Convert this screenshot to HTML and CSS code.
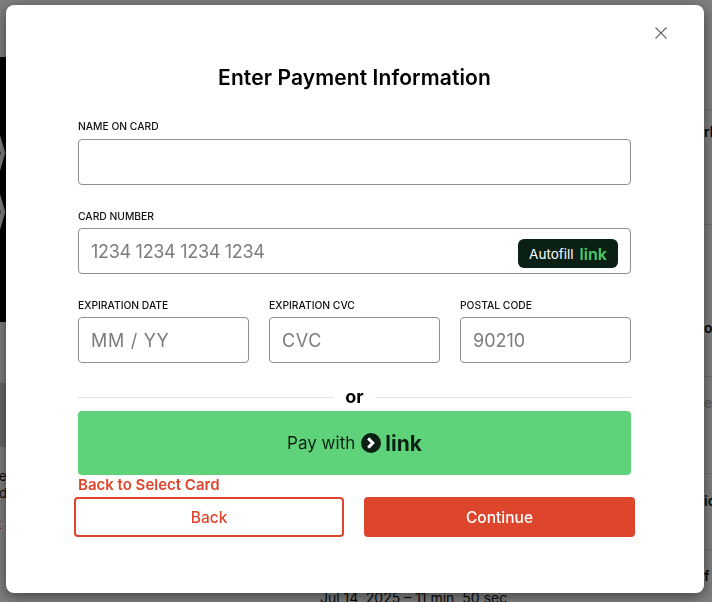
FILE: index.html
```html
<!DOCTYPE html>
<html lang="en">
<head>
  <meta charset="UTF-8" />
  <meta name="viewport" content="width=device-width, initial-scale=1.0"/>
  <title>Enter Payment Information</title>
  <link rel="stylesheet" href="styles.css">
</head>
<body>

  <div class="page">
    <div class="page-left">
      <div class="hero">
        <svg class="hero-art" width="6" height="265" viewBox="0 0 6 265" fill="none" stroke="#fff" stroke-width="4.5" stroke-linejoin="round">
          <path d="M-3 76 L3 96 L-3 116"/>
          <path d="M-3 135 L3 155 L-3 175"/>
        </svg>
      </div>
      <div class="band"></div>
      <div class="band band-dark"></div>
      <p class="peek peek-e">e</p>
      <p class="peek peek-do">do</p>
      <p class="peek peek-k">k</p>
    </div>
    <div class="page-mid">
      <p class="meta">Jul 14, 2025 – 11 min, 50 sec</p>
    </div>
    <div class="page-right">
      <div class="row row-1"></div>
      <div class="row row-2">rl</div>
      <div class="row row-3">o</div>
      <div class="row row-4"><span class="faint">e</span></div>
      <div class="row row-5">ic</div>
      <div class="row row-6">f</div>
    </div>
  </div>

  <div class="backdrop"></div>

  <div class="modal">
    <button class="close" aria-label="Close">
      <svg width="12" height="12" viewBox="0 0 12 12" fill="none" stroke="#666" stroke-width="1.1">
        <path d="M0.5 0.5 L11.5 11.5 M11.5 0.5 L0.5 11.5"/>
      </svg>
    </button>

    <h2 class="title">Enter Payment Information</h2>

    <div class="field field-name">
      <label>NAME ON CARD</label>
      <input type="text">
    </div>

    <div class="field field-card">
      <label>CARD NUMBER</label>
      <div class="input-wrap">
        <input class="tight" type="text" placeholder="1234 1234 1234 1234">
        <div class="autofill">Autofill <span>link</span></div>
      </div>
    </div>

    <div class="field-row">
      <div class="field">
        <label>EXPIRATION DATE</label>
        <input class="loose" type="text" placeholder="MM / YY">
      </div>
      <div class="field">
        <label>EXPIRATION CVC</label>
        <input class="loose" type="text" placeholder="CVC">
      </div>
      <div class="field">
        <label>POSTAL CODE</label>
        <input type="text" placeholder="90210">
      </div>
    </div>

    <div class="divider"><span>or</span></div>

    <button class="pay-link">
      Pay with
      <svg class="link-logo" width="20" height="20" viewBox="0 0 20 20">
        <circle cx="10" cy="10" r="10" fill="#0a2014"/>
        <path d="M7.2 5.4 L11.8 10 L7.2 14.6" fill="none" stroke="#fff" stroke-width="3"/>
      </svg>
      <b>link</b>
    </button>

    <a class="back-link" href="#">Back to Select Card</a>

    <div class="actions">
      <button class="btn btn-outline">Back</button>
      <button class="btn btn-solid">Continue</button>
    </div>
  </div>

</body>
</html>
```

FILE: styles.css
```css
:root {
  --red: #dd462c;
  --green: #5fd37a;
  --ink: #0a2014;
  --border: #8f8f8f;
}

* {
  box-sizing: border-box;
  margin: 0;
  padding: 0;
  font-family: Inter, sans-serif;
}

body {
  height: 100vh;
  overflow: hidden;
  background: #fff;
  color: #111;
}

/* page behind the modal */
.page {
  display: flex;
  height: 602px;
  overflow: hidden;
}

.page-left {
  width: 6px;
  overflow: hidden;
  padding-top: 57px;
}

.hero {
  height: 265px;
  background: #000;
}

.hero-art {
  display: block;
  overflow: hidden;
}

.band {
  height: 61px;
}

.band-dark {
  height: 64px;
  background: #d0d0d0;
}

.peek {
  font-size: 13px;
  line-height: 17px;
  white-space: nowrap;
}

.peek-e {
  margin-top: 21px;
  margin-left: -1px;
}

.peek-do {
  margin-left: -1px;
}

.peek-k {
  margin-top: 14px;
  margin-left: -6px;
  color: var(--red);
  font-weight: 600;
}

.page-mid {
  flex: 1;
  display: flex;
  align-items: flex-end;
  padding-left: 314px;
}

.meta {
  font-size: 14px;
  line-height: 17px;
  margin-bottom: -4px;
  white-space: nowrap;
}

.page-right {
  width: 8px;
  overflow: hidden;
}

.row {
  border-bottom: 1px solid #ddd;
  font-size: 14px;
  font-weight: 600;
  line-height: 17px;
  white-space: nowrap;
}

.row-1 { height: 110px; }
.row-2 { height: 115px; padding-top: 13px; }
.row-3 { height: 152px; padding-top: 94px; }
.row-4 { height: 97px; padding-top: 17px; }
.row-5 { height: 76px; padding-top: 18px; }
.row-6 { height: 52px; padding-top: 17px; border-bottom: 0; }

.faint {
  color: #bbb;
}

.backdrop {
  position: fixed;
  inset: 0;
  background: rgba(0, 0, 0, 0.5);
}

/* modal */
.modal {
  position: fixed;
  top: 5px;
  left: 6px;
  width: 698px;
  height: 588px;
  background: #fff;
  border-radius: 8px;
  box-shadow: 0 3px 14px rgba(0, 0, 0, 0.5);
  padding: 61px 73px 0 72px;
}

.close {
  position: absolute;
  top: 22px;
  right: 37px;
  width: 12px;
  height: 12px;
  border: 0;
  background: none;
}

.close svg {
  display: block;
}

.title {
  font-size: 21px;
  font-weight: 600;
  line-height: 24px;
  text-align: center;
  color: #000;
  letter-spacing: 0.1px;
}

.field label {
  display: block;
  font-size: 10.3px;
  font-weight: 500;
  line-height: 14px;
  color: #111;
  margin-bottom: 6px;
}

.field input {
  display: block;
  width: 100%;
  height: 46px;
  border: 1px solid var(--border);
  border-radius: 4px;
  padding: 0 12px;
  font-size: 18px;
  color: #111;
  background: #fff;
  outline: none;
}

.field input::placeholder {
  color: #7c7c7c;
  opacity: 1;
}

.field input.tight {
  letter-spacing: -0.3px;
}

.field input.loose {
  letter-spacing: 0.7px;
}

.field-name {
  margin-top: 29px;
}

.field-card {
  margin-top: 23px;
}

.field-card label,
.field-row label {
  padding-top: 2px;
  line-height: 12px;
  margin-bottom: 6px;
}

.input-wrap {
  position: relative;
}

.autofill {
  position: absolute;
  top: 11px;
  right: 13px;
  width: 100px;
  height: 29px;
  display: flex;
  align-items: center;
  justify-content: center;
  gap: 6px;
  background: var(--ink);
  border-radius: 6px;
  font-size: 13.5px;
  color: #fff;
}

.autofill span {
  color: #4fc86a;
  font-size: 16px;
  font-weight: 600;
}

.field-row {
  display: grid;
  grid-template-columns: repeat(3, 1fr);
  gap: 20px;
  margin-top: 23px;
}

.divider {
  display: flex;
  align-items: center;
  gap: 11px;
  height: 24px;
  margin-top: 22px;
}

.divider::before,
.divider::after {
  content: "";
  flex: 1;
  border-top: 1px solid #e2e2e2;
}

.divider span {
  font-size: 18px;
  font-weight: 700;
  color: #000;
  line-height: 20px;
}

.pay-link {
  display: flex;
  align-items: center;
  justify-content: center;
  gap: 6px;
  width: 100%;
  height: 64px;
  margin-top: 2px;
  border: 0;
  border-radius: 4px;
  background: var(--green);
  color: var(--ink);
  font-size: 17px;
}

.pay-link b {
  font-size: 21px;
  font-weight: 700;
  margin-left: -2px;
}

.back-link {
  display: block;
  font-size: 15px;
  font-weight: 600;
  line-height: 20px;
  color: var(--red);
  text-decoration: none;
}

.actions {
  display: grid;
  grid-template-columns: 270px 1fr;
  gap: 20px;
  margin: 2px -4px 0;
}

.btn {
  height: 40px;
  border-radius: 4px;
  font-size: 15.5px;
  font-weight: 500;
}

.btn-outline {
  border: 2px solid var(--red);
  background: #fff;
  color: var(--red);
}

.btn-solid {
  border: 0;
  background: var(--red);
  color: #fff;
}
```
